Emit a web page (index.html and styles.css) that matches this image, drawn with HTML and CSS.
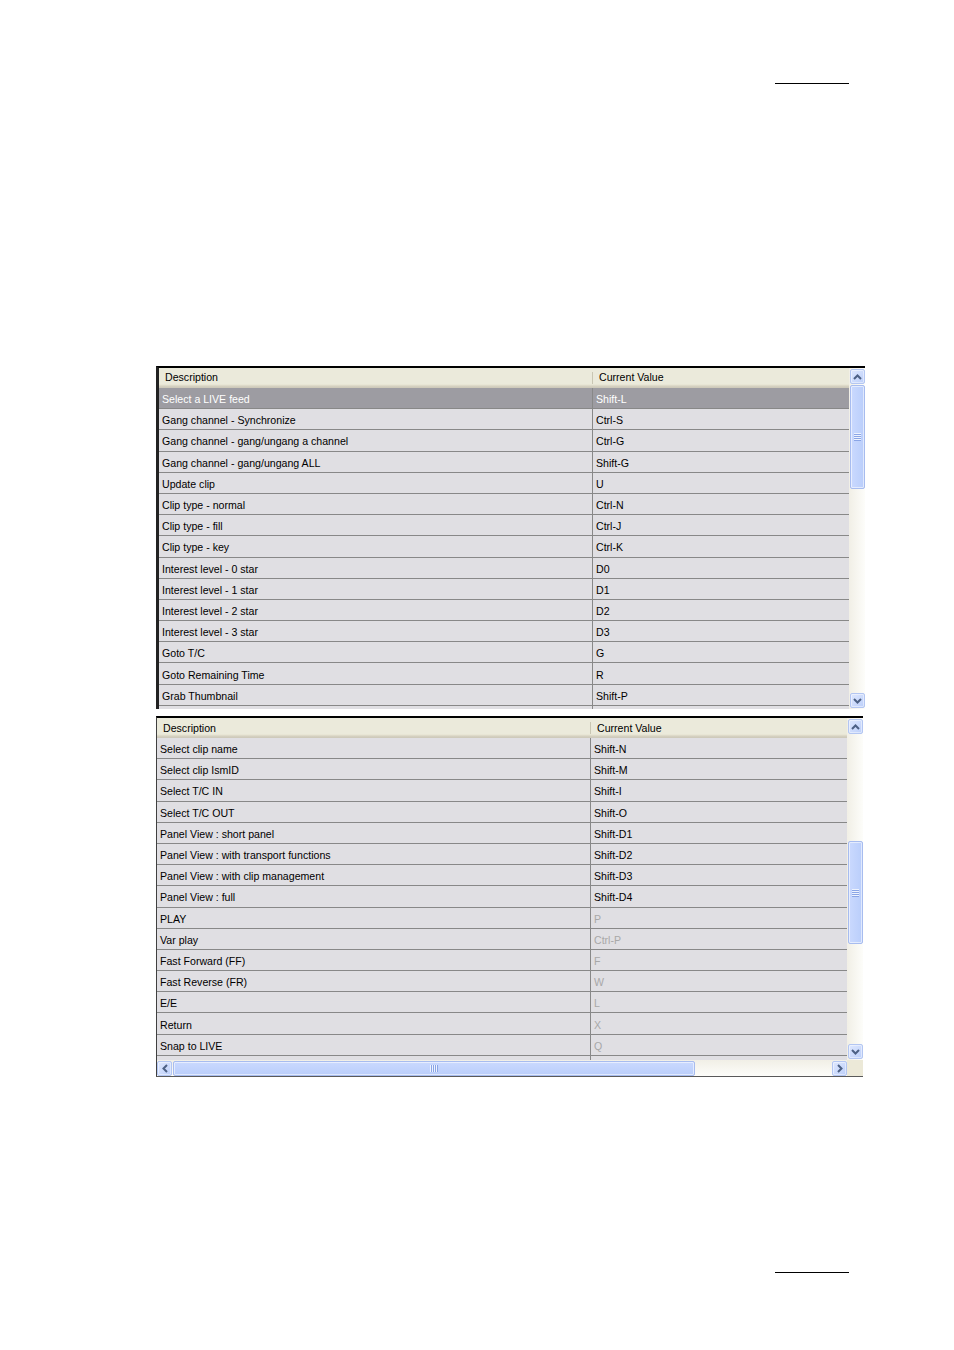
FILE: index.html
```html
<!DOCTYPE html>
<html>
<head>
<meta charset="utf-8">
<title>Shortcuts</title>
<link rel="stylesheet" href="styles.css">
</head>
<body>
<div class="page">
  <div class="rule rule-top"></div>

  <div class="list list-1">
    <div class="view">
      <div class="head"><div class="hcell hcell-first">Description</div><div class="hcell">Current Value</div></div>
      <div class="rows">
        <div class="row sel"><div class="c1">Select a LIVE feed</div><div class="c2">Shift-L</div></div>
        <div class="row"><div class="c1">Gang channel - Synchronize</div><div class="c2">Ctrl-S</div></div>
        <div class="row"><div class="c1">Gang channel - gang/ungang a channel</div><div class="c2">Ctrl-G</div></div>
        <div class="row"><div class="c1">Gang channel - gang/ungang ALL</div><div class="c2">Shift-G</div></div>
        <div class="row"><div class="c1">Update clip</div><div class="c2">U</div></div>
        <div class="row"><div class="c1">Clip type - normal</div><div class="c2">Ctrl-N</div></div>
        <div class="row"><div class="c1">Clip type - fill</div><div class="c2">Ctrl-J</div></div>
        <div class="row"><div class="c1">Clip type - key</div><div class="c2">Ctrl-K</div></div>
        <div class="row"><div class="c1">Interest level - 0 star</div><div class="c2">D0</div></div>
        <div class="row"><div class="c1">Interest level - 1 star</div><div class="c2">D1</div></div>
        <div class="row"><div class="c1">Interest level - 2 star</div><div class="c2">D2</div></div>
        <div class="row"><div class="c1">Interest level - 3 star</div><div class="c2">D3</div></div>
        <div class="row"><div class="c1">Goto T/C</div><div class="c2">G</div></div>
        <div class="row"><div class="c1">Goto Remaining Time</div><div class="c2">R</div></div>
        <div class="row"><div class="c1">Grab Thumbnail</div><div class="c2">Shift-P</div></div>
        <div class="row"><div class="c1"></div><div class="c2"></div></div>
      </div>
    </div>
    <div class="vscroll">
      <div class="btn btn-v"><svg width="9" height="6" viewBox="0 0 9 6"><path d="M1 5 L4.5 1.5 L8 5" fill="none" stroke="#4d6185" stroke-width="2"/></svg></div>
      <div class="thumb thumb-v thumb-1"><svg width="7" height="8" viewBox="0 0 7 8"><path d="M0 0.5h7M0 2.5h7M0 4.5h7M0 6.5h7" stroke="#eef3fe" stroke-width="1"/><path d="M0 1.5h7M0 3.5h7M0 5.5h7M0 7.5h7" stroke="#8aa5e6" stroke-width="1"/></svg></div>
      <div class="track"></div>
      <div class="btn btn-v btn-end"><svg width="9" height="6" viewBox="0 0 9 6"><path d="M1 1 L4.5 4.5 L8 1" fill="none" stroke="#4d6185" stroke-width="2"/></svg></div>
    </div>
  </div>

  <div class="list list-2">
    <div class="view">
      <div class="head"><div class="hcell hcell-first">Description</div><div class="hcell">Current Value</div></div>
      <div class="rows">
        <div class="row"><div class="c1">Select clip name</div><div class="c2">Shift-N</div></div>
        <div class="row"><div class="c1">Select clip IsmID</div><div class="c2">Shift-M</div></div>
        <div class="row"><div class="c1">Select T/C IN</div><div class="c2">Shift-I</div></div>
        <div class="row"><div class="c1">Select T/C OUT</div><div class="c2">Shift-O</div></div>
        <div class="row"><div class="c1">Panel View : short panel</div><div class="c2">Shift-D1</div></div>
        <div class="row"><div class="c1">Panel View : with transport functions</div><div class="c2">Shift-D2</div></div>
        <div class="row"><div class="c1">Panel View : with clip management</div><div class="c2">Shift-D3</div></div>
        <div class="row"><div class="c1">Panel View : full</div><div class="c2">Shift-D4</div></div>
        <div class="row"><div class="c1">PLAY</div><div class="c2 dim">P</div></div>
        <div class="row"><div class="c1">Var play</div><div class="c2 dim">Ctrl-P</div></div>
        <div class="row"><div class="c1">Fast Forward (FF)</div><div class="c2 dim">F</div></div>
        <div class="row"><div class="c1">Fast Reverse (FR)</div><div class="c2 dim">W</div></div>
        <div class="row"><div class="c1">E/E</div><div class="c2 dim">L</div></div>
        <div class="row"><div class="c1">Return</div><div class="c2 dim">X</div></div>
        <div class="row"><div class="c1">Snap to LIVE</div><div class="c2 dim">Q</div></div>
        <div class="row"><div class="c1"></div><div class="c2"></div></div>
      </div>
    </div>
    <div class="vscroll">
      <div class="btn btn-v"><svg width="9" height="6" viewBox="0 0 9 6"><path d="M1 5 L4.5 1.5 L8 5" fill="none" stroke="#4d6185" stroke-width="2"/></svg></div>
      <div class="track track-top"></div>
      <div class="thumb thumb-v thumb-2"><svg width="7" height="8" viewBox="0 0 7 8"><path d="M0 0.5h7M0 2.5h7M0 4.5h7M0 6.5h7" stroke="#eef3fe" stroke-width="1"/><path d="M0 1.5h7M0 3.5h7M0 5.5h7M0 7.5h7" stroke="#8aa5e6" stroke-width="1"/></svg></div>
      <div class="track"></div>
      <div class="btn btn-v btn-end"><svg width="9" height="6" viewBox="0 0 9 6"><path d="M1 1 L4.5 4.5 L8 1" fill="none" stroke="#4d6185" stroke-width="2"/></svg></div>
    </div>
    <div class="hscroll">
      <div class="btn btn-h"><svg width="6" height="9" viewBox="0 0 6 9"><path d="M5 1 L1.5 4.5 L5 8" fill="none" stroke="#4d6185" stroke-width="2"/></svg></div>
      <div class="thumb thumb-h"><svg width="8" height="7" viewBox="0 0 8 7"><path d="M0.5 0v7M2.5 0v7M4.5 0v7M6.5 0v7" stroke="#eef3fe" stroke-width="1"/><path d="M1.5 0v7M3.5 0v7M5.5 0v7M7.5 0v7" stroke="#8aa5e6" stroke-width="1"/></svg></div>
      <div class="track track-h"></div>
      <div class="btn btn-h"><svg width="6" height="9" viewBox="0 0 6 9"><path d="M1 1 L4.5 4.5 L1 8" fill="none" stroke="#4d6185" stroke-width="2"/></svg></div>
    </div>
    <div class="corner"></div>
  </div>

  <div class="rule rule-bottom"></div>
</div>
</body>
</html>
```

FILE: styles.css
```css
* { box-sizing: border-box; }
html, body { margin: 0; padding: 0; background: #ffffff; }
body {
  font-family: "Liberation Sans", Arial, sans-serif;
  font-size: 10.6px;
  color: #000;
}
.page {
  width: 954px;
  height: 1350px;
  display: flex;
  flex-direction: column;
}
.rule {
  width: 74px;
  height: 1px;
  margin-left: 775px;
  background: #000;
  flex: none;
}
.rule-top { margin-top: 83px; }
.rule-bottom { margin-top: 195px; }

/* list views */
.list {
  flex: none;
  margin-left: 156px;
  border-top: 2px solid #000;
}
.list-1 {
  margin-top: 282px;
  width: 709px;
  height: 343px;
  border-left: 3px solid #222;
  display: flex;
}
.list-2 {
  margin-top: 7px;
  width: 707px;
  height: 361px;
  border-left: 1px solid #404040;
  border-bottom: 1px solid #5a5a5a;
  display: grid;
  grid-template-columns: 690px 16px;
  grid-template-rows: 342px 16px;
}
.view {
  width: 690px;
  display: flex;
  flex-direction: column;
  overflow: hidden;
  background: #e0dfe3;
}
.head {
  flex: none;
  height: 20px;
  display: grid;
  grid-template-columns: 434px 1fr;
  background: linear-gradient(#ebeadb 0, #ebeadb 16px, #e5e2d0 17px, #d6d2c2 18px, #cbc7b8 20px);
}
.hcell {
  padding-left: 6px;
  line-height: 19px;
  white-space: nowrap;
}
.list-2 .hcell { line-height: 21px; }
.hcell-first {
  background: linear-gradient(#c9c6b3, #c9c6b3) no-repeat right 0 top 4px / 1px 12px;
}
.rows {
  flex: 1;
  overflow: hidden;
}
.row {
  height: 21.2px;
  display: grid;
  grid-template-columns: 434px 1fr;
  border-bottom: 1px solid #888888;
  background: #e0dfe3;
  white-space: nowrap;
}
.row .c1 {
  border-right: 1px solid #888888;
  padding: 2px 0 0 3px;
  display: flex;
  align-items: center;
}
.row .c2 {
  padding: 2px 0 0 3px;
  display: flex;
  align-items: center;
}
.row .dim { color: #a8a8a8; }
.row.sel { background: #9d9ca2; color: #fff; }

/* scrollbars */
.vscroll {
  width: 16px;
  display: flex;
  flex-direction: column;
  background: linear-gradient(to right, #f1efe6, #fdfdfa);
}
.btn {
  flex: none;
  width: 15px;
  height: 15px;
  display: flex;
  align-items: center;
  justify-content: center;
  border: 1px solid #b3c6f2;
  border-radius: 2px;
  background: linear-gradient(135deg, #dfe8fe, #bccffa);
  box-shadow: inset 0 0 0 1px rgba(255,255,255,0.45);
}
.btn-v { margin: 1px 0 0 1px; }
.btn-v.btn-end { margin: 0 0 1px 1px; }
.btn-h { margin: 1px 0 0 0; }
.thumb {
  flex: none;
  display: flex;
  align-items: center;
  justify-content: center;
  border: 1px solid #a7bcef;
  border-radius: 2px;
  box-shadow: inset 0 0 0 1px rgba(255,255,255,0.55);
}
.thumb-v {
  width: 15px;
  margin-left: 1px;
  background: linear-gradient(to right, #cad9fe, #bacefb);
}
.thumb-1 { height: 104px; margin-top: 1px; }
.thumb-2 { height: 103px; }
.track { flex: 1; }
.track-top { flex: none; height: 107px; }
.hscroll {
  display: flex;
  background: linear-gradient(#f1efe6, #fdfdfa);
}
.thumb-h {
  width: 522px;
  height: 15px;
  margin: 1px 0 0 1px;
  background: linear-gradient(#cad9fe, #bacefb);
}
.track-h { flex: 1; }
.corner { background: #ece9d8; }
```
